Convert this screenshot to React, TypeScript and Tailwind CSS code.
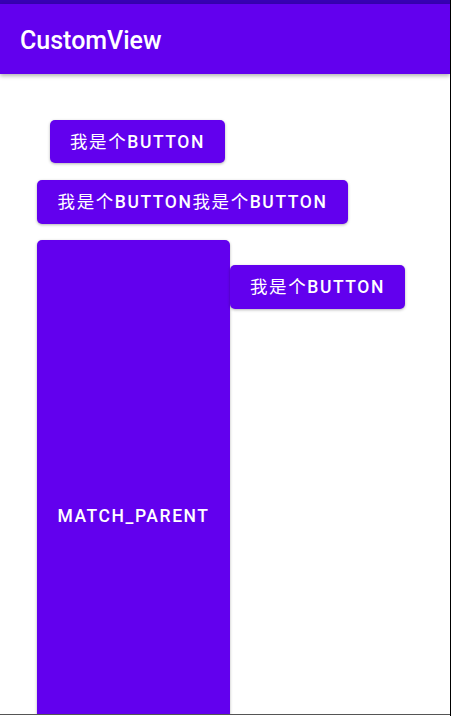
import React from "react";

const btn =
  "flex items-center justify-center rounded-[5px] bg-[#6200EE] text-white text-[17.5px] font-medium tracking-[0.09em] shadow-[0_1px_3px_rgba(0,0,0,0.3)]";

function Cjk({ children }: { children: React.ReactNode }) {
  return <span className="font-normal">{children}</span>;
}

export default function App() {
  return (
    <div
      className="relative h-[716px] w-[451px] overflow-hidden bg-white"
      style={{ fontFamily: 'Roboto, "Noto Sans CJK SC", sans-serif' }}
    >
      <div className="flex h-[714px] w-[450px] flex-col">
        <div className="h-[4px] bg-[#3700B3]" />
        <div className="relative z-10 flex h-[70px] items-center bg-[#6200EE] pl-[20px] pt-[4px] shadow-[0_2px_4px_rgba(0,0,0,0.3)]">
          <span className="text-[25px] font-medium text-white">CustomView</span>
        </div>
        <div className="flex flex-1 flex-col overflow-hidden">
          <div className="ml-[50px] mt-[46px] flex">
            <div className={`${btn} h-[43px] w-[175px] pt-[1px]`}>
              <Cjk>我是个</Cjk>BUTTON
            </div>
          </div>
          <div className="ml-[37px] mt-[17px] flex">
            <div className={`${btn} h-[44px] w-[311px] pt-[1px]`}>
              <Cjk>我是个</Cjk>BUTTON<Cjk>我是个</Cjk>BUTTON
            </div>
          </div>
          <div className="ml-[37px] mt-[16px] flex items-start">
            <div className={`${btn} h-[552px] w-[193px] shrink-0`}>MATCH_PARENT</div>
            <div className={`${btn} mt-[25px] h-[44px] w-[175px] shrink-0 pt-[1px]`}>
              <Cjk>我是个</Cjk>BUTTON
            </div>
          </div>
        </div>
      </div>
      <div className="h-[1px] w-[450px] bg-[#555]" />
      <div className="absolute right-0 top-0 h-[716px] w-[1px] bg-black" />
    </div>
  );
}
